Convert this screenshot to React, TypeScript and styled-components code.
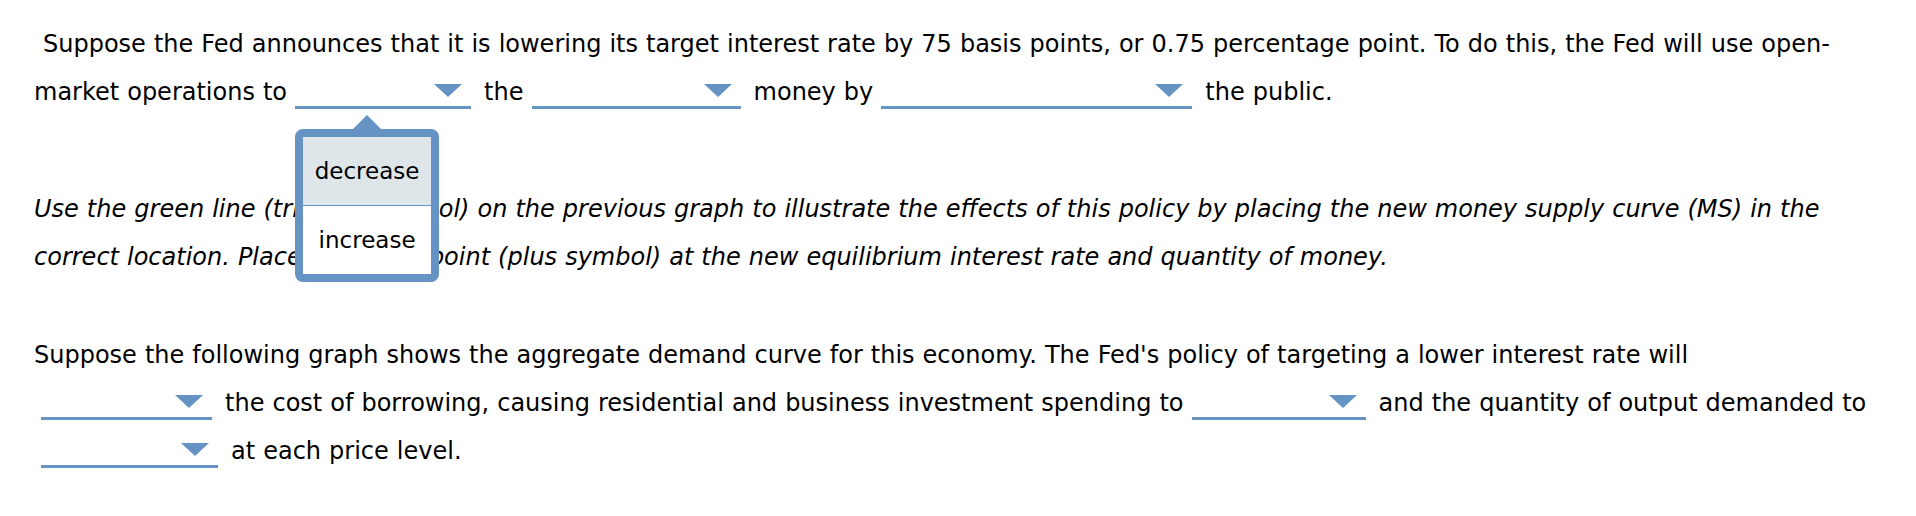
import styled, { createGlobalStyle } from 'styled-components';

const blue = '#6593c3';

const GlobalStyle = createGlobalStyle`
	html,
	body {
		margin: 0;
		padding: 0;
		background: #ffffff;
	}

	body {
		font-family: 'DejaVu Sans', Verdana, sans-serif;
		color: #000000;
	}
`;

const Page = styled.div`
	padding: 20px 0 0 34px;
	font-size: 24px;
	line-height: 48px;
	word-spacing: 0.4px;
`;

const Paragraph = styled.p<{ $italic?: boolean; $gap: number }>`
	margin: 0 0 ${(props) => props.$gap}px;
	font-style: ${(props) => (props.$italic ? 'italic' : 'normal')};
`;

const Line = styled.span<{ $indent?: number }>`
	display: block;
	white-space: nowrap;
	padding-left: ${(props) => props.$indent ?? 0}px;
`;

const Select = styled.span<{ $width: number; $lead?: boolean }>`
	position: relative;
	display: inline-block;
	box-sizing: border-box;
	width: ${(props) => props.$width}px;
	height: 25px;
	margin: 0 5px 0 ${(props) => (props.$lead ? 7 : 0)}px;
	padding-right: 9px;
	border-bottom: 3px solid ${blue};
	vertical-align: -9px;
`;

const Arrow = styled.svg`
	display: block;
	margin-left: auto;
`;

const Menu = styled.div`
	position: absolute;
	top: calc(100% + 23px);
	left: 0;
	z-index: 5;
	box-sizing: border-box;
	width: 144px;
	border: 8px solid ${blue};
	border-radius: 8px;
	background: #ffffff;
	font-style: normal;
	word-spacing: normal;

	&::before {
		content: '';
		position: absolute;
		top: -22px;
		left: 50%;
		transform: translateX(-50%);
		border-left: 14px solid transparent;
		border-right: 14px solid transparent;
		border-bottom: 14px solid ${blue};
	}
`;

const Option = styled.div<{ $selected?: boolean }>`
	height: 68px;
	line-height: 68px;
	font-size: 23px;
	text-align: center;
	background: ${(props) => (props.$selected ? '#dfe6e9' : '#ffffff')};

	& + & {
		border-top: 1px solid ${blue};
	}
`;

type DropdownProps = {
	width: number;
	lead?: boolean;
	options?: string[];
	selected?: number;
};

const Dropdown = ({ width, lead, options, selected }: DropdownProps) => (
	<Select $width={width} $lead={lead}>
		<Arrow width="28" height="13" viewBox="0 0 28 13">
			<polygon points="0,0 28,0 14,13" fill={blue} />
		</Arrow>
		{options && (
			<Menu>
				{options.map((option, i) => (
					<Option key={option} $selected={i === selected}>
						{option}
					</Option>
				))}
			</Menu>
		)}
	</Select>
);

const App = () => {
	return (
		<>
			<GlobalStyle />
			<Page>
				<Paragraph $gap={69}>
					<Line $indent={9}>
						Suppose the Fed announces that it is lowering its target interest rate by 75 basis
						points, or 0.75 percentage point. To do this, the Fed will use open-
					</Line>
					<Line>
						market operations to{' '}
						<Dropdown width={176} options={['decrease', 'increase']} selected={0} /> the{' '}
						<Dropdown width={209} /> money by <Dropdown width={311} /> the public.
					</Line>
				</Paragraph>
				<Paragraph $italic $gap={50}>
					<Line>
						Use the green line (triangle symbol) on the previous graph to illustrate the effects of
						this policy by placing the new money supply curve (MS) in the
					</Line>
					<Line>
						correct location. Place the black point (plus symbol) at the new equilibrium interest
						rate and quantity of money.
					</Line>
				</Paragraph>
				<Paragraph $gap={0}>
					<Line>
						Suppose the following graph shows the aggregate demand curve for this economy. The
						Fed's policy of targeting a lower interest rate will
					</Line>
					<Line>
						<Dropdown width={171} lead /> the cost of borrowing, causing residential and business
						investment spending to <Dropdown width={174} /> and the quantity of output demanded to
					</Line>
					<Line>
						<Dropdown width={177} lead /> at each price level.
					</Line>
				</Paragraph>
			</Page>
		</>
	);
};

export default App;
